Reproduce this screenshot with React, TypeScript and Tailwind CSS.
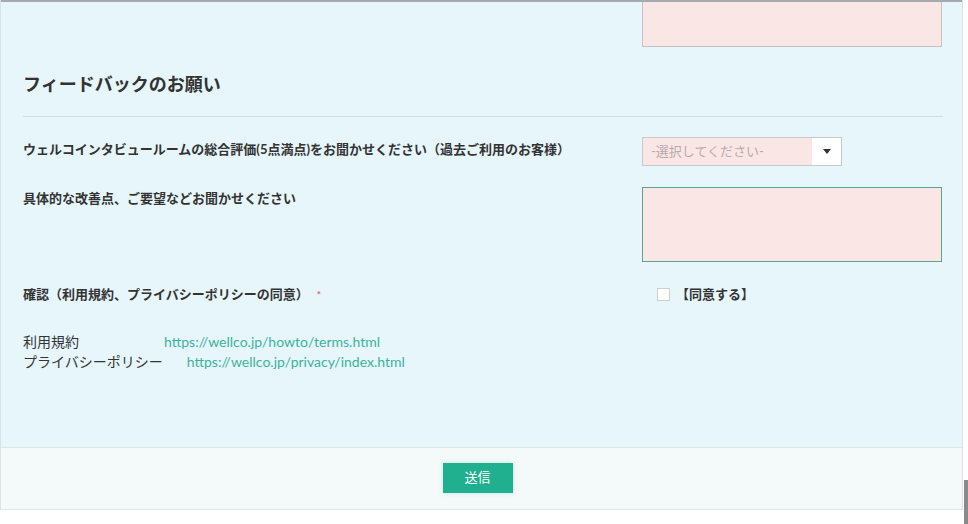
import React from "react";

const font = { fontFamily: 'Lato, "Noto Sans CJK JP", sans-serif' };

function FieldRow({
  label,
  required,
  labelPad = "",
  children,
}: {
  label: string;
  required?: boolean;
  labelPad?: string;
  children: React.ReactNode;
}) {
  return (
    <div className="flex pl-[22px]">
      <div className={`w-[619px] shrink-0 text-[13px] font-bold leading-[20px] text-[#333] ${labelPad}`}>
        {label}
        {required ? <span className="ml-[8px] align-top text-[10px] text-[#e25b5b]">*</span> : null}
      </div>
      <div className="flex-1">{children}</div>
    </div>
  );
}

export default function App() {
  return (
    <div className="relative h-[524px] w-[968px] overflow-hidden bg-white" style={font}>
      <div className="w-[963px] border-x border-[#d9e2e5]">
        <div className="h-[447px] border-t-2 border-[#a3abb0] bg-[#e7f6fb]">
          <div className="ml-[641px] h-[45px] w-[300px] border border-t-0 border-[#c3c3c6] bg-[#fbe6e6]" />

          <h2 className="mt-[25px] pl-[22px] text-[18px] font-bold leading-[24px] text-[#333]">フィードバックのお願い</h2>

          <div className="ml-[22px] mr-[19px] mt-[20px] border-t border-[#d3dcdf]" />

          <div className="mt-[20px]">
            <FieldRow label="ウェルコインタビュールームの総合評価(5点満点)をお聞かせください（過去ご利用のお客様）" labelPad="pt-[2px]">
              <div className="flex h-[29px] w-[200px] border border-[#c9c9c9] bg-white">
                <div className="flex w-[169px] items-center bg-[#fbe6e6] pl-[8px] text-[13px] text-[#b8aaaa]">
                  -選択してください-
                </div>
                <div className="flex flex-1 items-center justify-center">
                  <span className="h-0 w-0 border-x-[4px] border-t-[5px] border-x-transparent border-t-[#333]" />
                </div>
              </div>
            </FieldRow>
          </div>

          <div className="mt-[21px]">
            <FieldRow label="具体的な改善点、ご要望などお聞かせください" labelPad="pt-[1px]">
              <div className="h-[75px] w-[300px] border border-[#5ba58c] bg-[#fbe6e6]" />
            </FieldRow>
          </div>

          <div className="mt-[22px]">
            <FieldRow label="確認（利用規約、プライバシーポリシーの同意）" required>
              <label className="flex items-center pl-[15px] text-[13px] font-bold leading-[20px] text-[#333]">
                <span className="h-[13px] w-[13px] border border-[#cfcfcf] bg-white" />
                <span className="ml-[6px]">【同意する】</span>
              </label>
            </FieldRow>
          </div>

          <div className="mt-[28px] pl-[22px] text-[14px] leading-[20px] text-[#333]">
            <div>
              利用規約
              <a className="ml-[85px] text-[14px] text-[#3bb39b]" href="#">https://wellco.jp/howto/terms.html</a>
            </div>
            <div>
              プライバシーポリシー
              <a className="ml-[24px] text-[14px] text-[#3bb39b]" href="#">https://wellco.jp/privacy/index.html</a>
            </div>
          </div>
        </div>

        <div className="flex h-[63px] justify-center border-y border-[#dfe6e6] bg-[#f4fafa] pr-[8px] pt-[15px]">
          <button className="h-[30px] w-[70px] bg-[#21b08f] text-[13px] text-white shadow-[0_0_4px_rgba(33,176,143,0.25)]">
            送信
          </button>
        </div>
      </div>

      <div className="absolute right-0 top-[480px] h-[44px] w-[4px] bg-[#8a8a8a]" />
    </div>
  );
}
